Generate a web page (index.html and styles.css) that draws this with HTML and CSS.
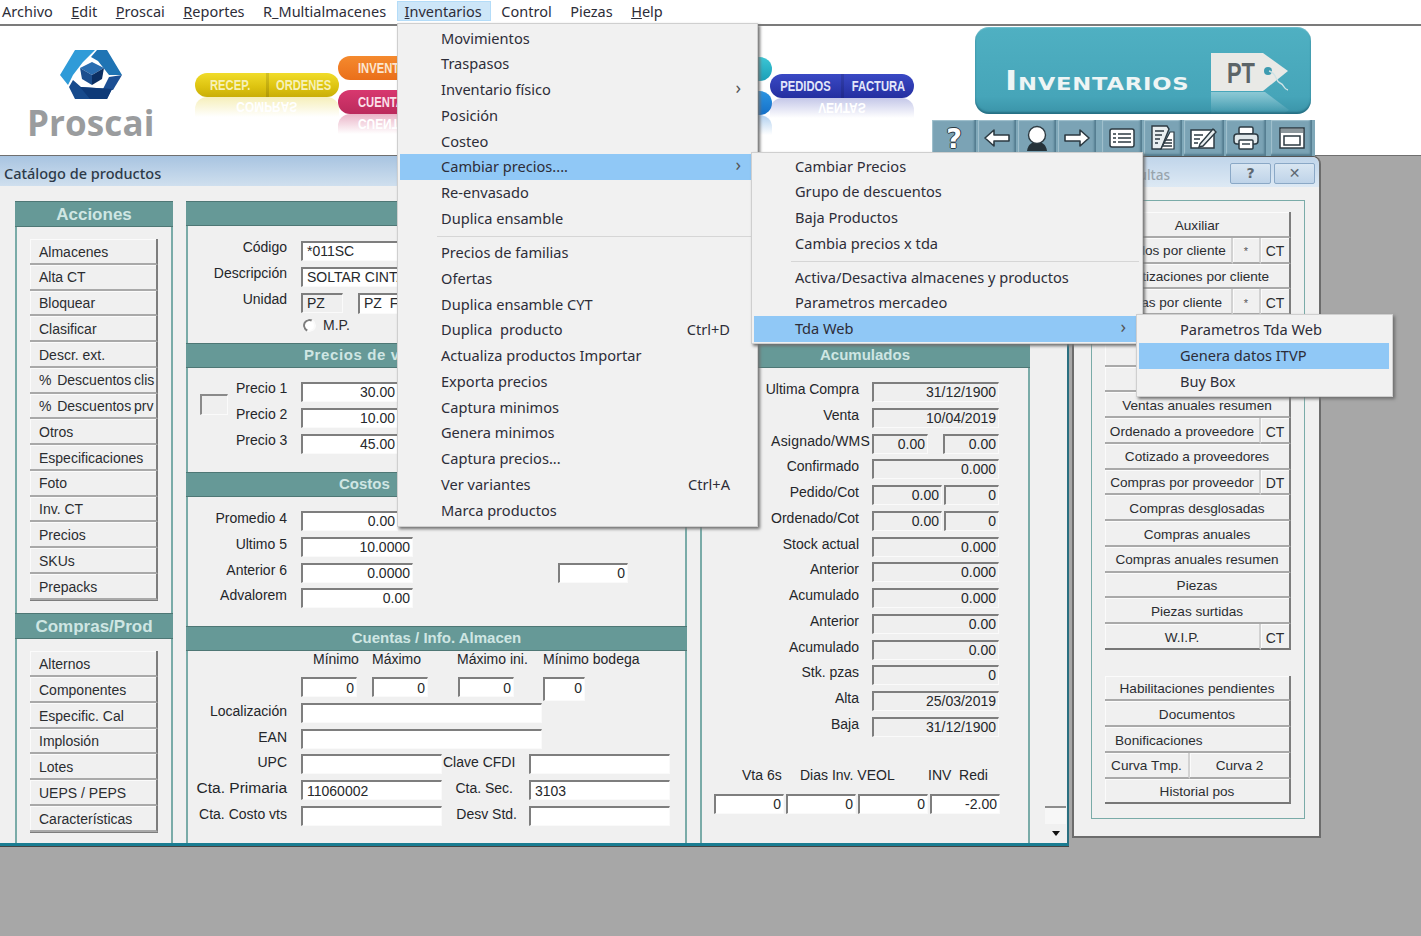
FILE: index.html
```html
<!DOCTYPE html>
<html lang="es">
<head>
<meta charset="utf-8">
<title>Catálogo de productos</title>
<link rel="stylesheet" href="styles.css">
</head>
<body>
<nav class="menubar">
  <span class="mb">Archivo</span>
  <span class="mb"><u>E</u>dit</span>
  <span class="mb"><u>P</u>roscai</span>
  <span class="mb"><u>R</u>eportes</span>
  <span class="mb">R_Multialmacenes</span>
  <span class="mb mb-open"><u>I</u>nventarios</span>
  <span class="mb">Control</span>
  <span class="mb">Piezas</span>
  <span class="mb"><u>H</u>elp</span>
</nav>

<header class="appbar">
  <div class="brand">
    <svg class="logo" viewBox="0 0 62 51" width="62" height="51" aria-hidden="true">
      <polygon fill="#2f9bd8" points="15,1 35,1 23,13 13,26 8,36 0,26"/>
      <polygon fill="#1f74b4" points="37,1 47,1 62,26 49,26 38,12 31,8"/>
      <polygon fill="#1c4f94" points="62,26 53,41 43,40 49,28"/>
      <polygon fill="#174a8c" points="13,31 21,38 52,40 47,50 15,50 9,38"/>
      <polygon fill="#0e3a78" points="20,38 52,40 47,50 30,50"/>
      <polygon fill="#2a6db0" points="20,19 32,13 44,19 32,26"/>
      <polygon fill="#1c4f8f" points="20,19 32,26 32,36 22,30"/>
      <polygon fill="#0b2f63" points="44,19 32,26 32,36 42,30"/>
    </svg>
    <div class="brand-name">Proscai</div>
  </div>

  <div class="pill-wrap pill-yellow">
    <div class="pill"><span class="pill-seg"><b>RECEP.</b></span><span class="pill-seg"><b>ORDENES</b></span></div>
    <div class="reflect"><span>COMPRAS</span></div>
  </div>

  <div class="pill-stack pill-stack-a">
    <div class="pill-wrap pill-orange"><div class="pill pill-short"><span class="pill-seg"><b>INVENTARIOS</b></span></div></div>
    <div class="pill-wrap pill-pink"><div class="pill pill-short"><span class="pill-seg"><b>CUENTAS</b></span></div><div class="reflect reflect-short"><span>CUENTAS</span></div></div>
  </div>

  <div class="pill-stack pill-stack-b">
    <div class="pill-wrap pill-cyan"><div class="pill pill-short"></div></div>
    <div class="pill-wrap pill-azure"><div class="pill pill-short"></div><div class="reflect reflect-short"></div></div>
  </div>

  <div class="pill-wrap pill-blue">
    <div class="pill"><span class="pill-seg"><b>PEDIDOS</b></span><span class="pill-seg"><b>FACTURA</b></span></div>
    <div class="reflect"><span>VENTAS</span></div>
  </div>

  <div class="right-tools">
    <div class="banner">
      <div class="banner-title">Inventarios</div>
      <svg class="tag" viewBox="0 0 80 62" width="80" height="62">
        <defs><linearGradient id="tagfade" x1="0" y1="0" x2="0" y2="1"><stop offset="0" stop-color="#ffffff" stop-opacity=".38"/><stop offset="1" stop-color="#ffffff" stop-opacity="0"/></linearGradient></defs>
        <polygon fill="url(#tagfade)" points="0,40 54,40 78,58 72,62 0,62"/>
        <polygon fill="#e9e9e6" points="0,1 52,1 77,19 52,39 0,39"/>
        <circle cx="57" cy="19" r="4" fill="#3d9bb0"/>
        <path d="M58 19c8 2 6 10 11 12s3 6 8 7" fill="none" stroke="#cfe3e6" stroke-width="1.4"/>
        <text x="16" y="31" class="tag-text" textLength="28" lengthAdjust="spacingAndGlyphs">PT</text>
      </svg>
    </div>
    <div class="iconbar">
      <div class="tb tb-a"><span class="q">?</span></div>
      <div class="tb tb-b"><svg viewBox="0 0 28 20" width="28" height="20"><path d="M2 10 11 2v5h15v6H11v5z" fill="#fff" stroke="#2c3a42" stroke-width="1.6" stroke-linejoin="round"/></svg></div>
      <div class="tb tb-b"><svg viewBox="0 0 26 26" width="26" height="26"><path d="M3 26c1-7 5-9 10-9s9 2 10 9z" fill="#26333a"/><circle cx="13" cy="10" r="8.5" fill="#fff" stroke="#2c3a42" stroke-width="1.4"/></svg></div>
      <div class="tb tb-b"><svg viewBox="0 0 28 20" width="28" height="20"><path d="M26 10 17 2v5H2v6h15v5z" fill="#fff" stroke="#2c3a42" stroke-width="1.6" stroke-linejoin="round"/></svg></div>
      <div class="tb tb-c tb-gap"><svg viewBox="0 0 26 20" width="26" height="20"><rect x="1" y="1" width="24" height="18" rx="2" fill="#fff" stroke="#2c3a42" stroke-width="1.5"/><path d="M4 6h3m2 0h13M4 10h3m2 0h13M4 14h3m2 0h13" stroke="#2c3a42" stroke-width="1.6"/></svg></div>
      <div class="tb tb-b"><svg viewBox="0 0 26 26" width="26" height="26"><path d="M2 1h15l2 3-8 20H2z" fill="#e8eef0" stroke="#2c3a42" stroke-width="1.4"/><path d="M5 6h9M5 10h7M5 14h5M5 18h3" stroke="#2c3a42" stroke-width="1.6"/><path d="M20 7h4v17H11z" fill="#fff" stroke="#2c3a42" stroke-width="1.2"/><path d="M16 15h6M14 18h8M13 21h9" stroke="#2c3a42" stroke-width="1.3"/></svg></div>
      <div class="tb tb-c"><svg viewBox="0 0 28 24" width="28" height="24"><rect x="1" y="4" width="23" height="18" fill="#fff" stroke="#2c3a42" stroke-width="1.5"/><path d="M4 9h9M4 13h6M4 17h4" stroke="#2c3a42" stroke-width="1.5"/><path d="M10 18 23 3l3 3-13 14-4 1z" fill="#e8eef0" stroke="#2c3a42" stroke-width="1.4"/></svg></div>
      <div class="tb tb-c"><svg viewBox="0 0 26 24" width="26" height="24"><rect x="6" y="1" width="14" height="7" rx="1.5" fill="#fff" stroke="#2c3a42" stroke-width="1.5"/><rect x="1" y="8" width="24" height="10" rx="3" fill="#dfe7ea" stroke="#2c3a42" stroke-width="1.5"/><rect x="6" y="14" width="14" height="9" rx="1" fill="#fff" stroke="#2c3a42" stroke-width="1.5"/><path d="M9 18h8" stroke="#2c3a42" stroke-width="1.4"/></svg></div>
      <div class="tb tb-d"><svg viewBox="0 0 26 22" width="26" height="22"><rect x="1" y="1" width="24" height="20" fill="#fff" stroke="#2c3a42" stroke-width="1.5"/><rect x="2" y="2" width="22" height="4" fill="#8c979c"/><rect x="5" y="9" width="16" height="9" fill="#fff" stroke="#2c3a42" stroke-width="1.5"/></svg></div>
    </div>
  </div>
</header>

<main class="desktop">
  <section class="window win-main">
    <div class="titlebar">Catálogo de productos</div>
    <div class="win-body">

      <div class="col-left">
        <div class="panel panel-acc">
          <h2 class="hdr hdr-big">Acciones</h2>
          <div class="btn-list">
            <div class="btn">Almacenes</div>
            <div class="btn">Alta CT</div>
            <div class="btn">Bloquear</div>
            <div class="btn">Clasificar</div>
            <div class="btn">Descr. ext.</div>
            <div class="btn btn-pct">%&nbsp; Descuentos clis</div>
            <div class="btn btn-pct">%&nbsp; Descuentos prv</div>
            <div class="btn">Otros</div>
            <div class="btn">Especificaciones</div>
            <div class="btn">Foto</div>
            <div class="btn">Inv. CT</div>
            <div class="btn">Precios</div>
            <div class="btn">SKUs</div>
            <div class="btn">Prepacks</div>
          </div>
        </div>
        <div class="panel panel-comp">
          <h2 class="hdr hdr-big">Compras/Prod</h2>
          <div class="btn-list">
            <div class="btn">Alternos</div>
            <div class="btn">Componentes</div>
            <div class="btn">Especific. Cal</div>
            <div class="btn">Implosión</div>
            <div class="btn">Lotes</div>
            <div class="btn">UEPS / PEPS</div>
            <div class="btn">Características</div>
          </div>
        </div>
      </div>

      <div class="panel col-mid">
        <h2 class="hdr"></h2>
        <div class="sec sec-gen">
          <div class="row"><span class="lbl">Código</span><div class="in w-wide">*011SC</div></div>
          <div class="row"><span class="lbl">Descripción</span><div class="in w-wide">SOLTAR CINTA</div></div>
          <div class="row"><span class="lbl">Unidad</span><div class="in g w-42">PZ</div><div class="in w-wide2 tall">PZ  F</div></div>
          <div class="row radio-row"><i class="radio"></i><span class="radio-lbl">M.P.</span></div>
        </div>

        <h2 class="hdr hdr-left hdr-precios">Precios de venta</h2>
        <div class="sec sec-pre">
          <div class="checkbox-box"></div>
          <div class="pre-rows">
            <div class="row"><span class="lbl lbl-pre">Precio 1</span><div class="in r w-97">30.00</div></div>
            <div class="row"><span class="lbl lbl-pre">Precio 2</span><div class="in r w-97">10.00</div></div>
            <div class="row"><span class="lbl lbl-pre">Precio 3</span><div class="in r w-97">45.00</div></div>
          </div>
        </div>

        <h2 class="hdr hdr-left hdr-costos">Costos</h2>
        <div class="sec sec-cos">
          <div class="row"><span class="lbl">Promedio 4</span><div class="in r w-97">0.00</div></div>
          <div class="row"><span class="lbl">Ultimo 5</span><div class="in r w-112">10.0000</div></div>
          <div class="row"><span class="lbl">Anterior 6</span><div class="in r w-112">0.0000</div><div class="in r w-70 ml-145">0</div></div>
          <div class="row"><span class="lbl">Advalorem</span><div class="in r w-112">0.00</div></div>
        </div>

        <h2 class="hdr">Cuentas / Info. Almacen</h2>
        <div class="sec sec-cue">
          <div class="colhead">
            <span class="ch ch-a">Mínimo</span><span class="ch ch-b">Máximo</span><span class="ch ch-c">Máximo ini.</span><span class="ch">Mínimo bodega</span>
          </div>
          <div class="row row-mins">
            <div class="in r w-56">0</div><div class="in r w-56 ml-15">0</div><div class="in r w-56 ml-30">0</div><div class="in r w-42 ml-29 taller">0</div>
          </div>
          <div class="row"><span class="lbl">Localización</span><div class="in w-241"></div></div>
          <div class="row"><span class="lbl">EAN</span><div class="in w-241"></div></div>
          <div class="row"><span class="lbl">UPC</span><div class="in w-141"></div><span class="lbl2">Clave CFDI</span><div class="in w-141"></div></div>
          <div class="row"><span class="lbl lbl-big">Cta. Primaria</span><div class="in w-141">11060002</div><span class="lbl2">Cta. Sec.</span><div class="in w-141">3103</div></div>
          <div class="row"><span class="lbl">Cta. Costo vts</span><div class="in w-141"></div><span class="lbl2 lbl2-wide">Desv Std.</span><div class="in w-141"></div></div>
        </div>
      </div>

      <div class="panel col-right">
        <h2 class="hdr"></h2>
        <div class="sec sec-top"></div>
        <h2 class="hdr">Acumulados</h2>
        <div class="sec sec-acu">
          <div class="row"><span class="lbl lbl-acu lbl-ult">Ultima&nbsp; Compra</span><div class="in g r w-127">31/12/1900</div></div>
          <div class="row"><span class="lbl lbl-acu">Venta</span><div class="in g r w-127">10/04/2019</div></div>
          <div class="row"><span class="lbl lbl-acu lbl-over">Asignado/WMS</span><div class="in g r w-56">0.00</div><div class="in g r w-56 ml-15">0.00</div></div>
          <div class="row"><span class="lbl lbl-acu">Confirmado</span><div class="in g r w-127">0.000</div></div>
          <div class="row"><span class="lbl lbl-acu">Pedido/Cot</span><div class="in g r w-70">0.00</div><div class="in g r w-55 ml-2">0</div></div>
          <div class="row"><span class="lbl lbl-acu">Ordenado/Cot</span><div class="in g r w-70">0.00</div><div class="in g r w-55 ml-2">0</div></div>
          <div class="row"><span class="lbl lbl-acu">Stock actual</span><div class="in g r w-127">0.000</div></div>
          <div class="row"><span class="lbl lbl-acu">Anterior</span><div class="in g r w-127">0.000</div></div>
          <div class="row"><span class="lbl lbl-acu">Acumulado</span><div class="in g r w-127">0.000</div></div>
          <div class="row"><span class="lbl lbl-acu">Anterior</span><div class="in g r w-127">0.00</div></div>
          <div class="row"><span class="lbl lbl-acu">Acumulado</span><div class="in g r w-127">0.00</div></div>
          <div class="row"><span class="lbl lbl-acu">Stk. pzas</span><div class="in g r w-127">0</div></div>
          <div class="row"><span class="lbl lbl-acu">Alta</span><div class="in g r w-127">25/03/2019</div></div>
          <div class="row"><span class="lbl lbl-acu">Baja</span><div class="in g r w-127">31/12/1900</div></div>
          <div class="foot-head"><span class="fh fh-a">Vta 6s</span><span class="fh fh-b">Dias Inv. VEOL</span><span class="fh">INV&nbsp; Redi</span></div>
          <div class="foot-row"><div class="in r w-70">0</div><div class="in r w-70 ml-2">0</div><div class="in r w-70 ml-2">0</div><div class="in r w-70 ml-2">-2.00</div></div>
        </div>
      </div>

      <div class="scroll">
        <div class="scroll-track"></div>
        <div class="scroll-gap"></div>
        <div class="scroll-down"><i class="tri"></i></div>
      </div>
    </div>
  </section>

  <section class="window win-side">
    <div class="titlebar titlebar-side">
      <span class="side-title">Consultas</span>
      <span class="cap-btn">?</span>
      <span class="cap-btn cap-x">✕</span>
    </div>
    <div class="side-frame">
      <div class="side-list">
        <div class="sbtn">Auxiliar</div>
        <div class="srow"><div class="sbtn s-flex">Pedidos por cliente</div><div class="sbtn s-star">*</div><div class="sbtn s-ct">CT</div></div>
        <div class="sbtn">Cotizaciones por cliente</div>
        <div class="srow"><div class="sbtn s-flex">Ventas por cliente</div><div class="sbtn s-star">*</div><div class="sbtn s-ct">CT</div></div>
        <div class="sbtn"></div>
        <div class="sbtn"></div>
        <div class="sbtn"></div>
        <div class="sbtn">Ventas anuales resumen</div>
        <div class="srow"><div class="sbtn s-flex">Ordenado a proveedore</div><div class="sbtn s-ct">CT</div></div>
        <div class="sbtn">Cotizado a proveedores</div>
        <div class="srow"><div class="sbtn s-flex">Compras por proveedor</div><div class="sbtn s-ct">DT</div></div>
        <div class="sbtn">Compras desglosadas</div>
        <div class="sbtn">Compras anuales</div>
        <div class="sbtn">Compras anuales resumen</div>
        <div class="sbtn">Piezas</div>
        <div class="sbtn">Piezas surtidas</div>
        <div class="srow srow-last"><div class="sbtn s-flex">W.I.P.</div><div class="sbtn s-ct">CT</div></div>
      </div>
      <div class="side-list side-list-2">
        <div class="sbtn">Habilitaciones pendientes</div>
        <div class="sbtn">Documentos</div>
        <div class="sbtn s-left">Bonificaciones</div>
        <div class="srow"><div class="sbtn s-curva">Curva Tmp.</div><div class="sbtn s-flex">Curva 2</div></div>
        <div class="sbtn srow-last">Historial pos</div>
      </div>
    </div>
  </section>
</main>

<div class="menu menu-1">
  <div class="mi">Movimientos</div>
  <div class="mi">Traspasos</div>
  <div class="mi">Inventario físico<span class="arrow">›</span></div>
  <div class="mi">Posición</div>
  <div class="mi">Costeo</div>
  <div class="mi on">Cambiar precios....<span class="arrow">›</span></div>
  <div class="mi">Re-envasado</div>
  <div class="mi">Duplica ensamble</div>
  <div class="sep"></div>
  <div class="mi">Precios de familias</div>
  <div class="mi">Ofertas</div>
  <div class="mi">Duplica ensamble CYT</div>
  <div class="mi">Duplica&nbsp; producto<span class="key">Ctrl+D</span></div>
  <div class="mi">Actualiza productos Importar</div>
  <div class="mi">Exporta precios</div>
  <div class="mi">Captura minimos</div>
  <div class="mi">Genera minimos</div>
  <div class="mi">Captura precios...</div>
  <div class="mi">Ver variantes<span class="key">Ctrl+A</span></div>
  <div class="mi">Marca productos</div>
</div>

<div class="menu menu-2">
  <div class="mi">Cambiar Precios</div>
  <div class="mi">Grupo de descuentos</div>
  <div class="mi">Baja Productos</div>
  <div class="mi">Cambia precios x tda</div>
  <div class="sep"></div>
  <div class="mi">Activa/Desactiva almacenes y productos</div>
  <div class="mi">Parametros mercadeo</div>
  <div class="mi on">Tda Web<span class="arrow">›</span></div>
</div>

<div class="menu menu-3">
  <div class="mi">Parametros Tda Web</div>
  <div class="mi on">Genera datos ITVP</div>
  <div class="mi">Buy Box</div>
</div>
</body>
</html>
```

FILE: styles.css
```css
* { box-sizing: border-box; }
html, body { margin: 0; height: 936px; overflow: hidden; }
body {
  position: relative;
  display: flex;
  flex-direction: column;
  background: #a7a7a7;
  font: 14px/14px "Liberation Sans", Arial, sans-serif;
  color: #24262a;
}

/* menu bar */
.menubar {
  height: 26px;
  flex: none;
  display: flex;
  align-items: center;
  padding: 0 0 2px 2px;
  gap: 18.5px;
  background: #fff;
  border-bottom: 2px solid #7b7b7b;
  font: 14.5px/18px "Noto Sans", sans-serif;
  color: #2d2d38;
  white-space: nowrap;
}
.mb-open {
  margin: 0 -8px;
  padding: 1px 9px 0 8px;
  height: 20px;
  background: #cde6f8;
  box-shadow: inset 0 0 0 1px #b4dcf8;
}

/* header with logo and shortcuts */
.appbar {
  height: 130px;
  flex: none;
  display: flex;
  align-items: flex-start;
  background: #fff;
  border-bottom: 1px solid #6f6f6f;
}
.brand { width: 195px; flex: none; padding: 23px 0 0 28px; }
.logo { display: block; margin-left: 32px; }
.brand-name {
  margin-top: 4px;
  margin-left: -1px;
  font: 700 35px/37px "Open Sans", sans-serif;
  letter-spacing: .1px;
  color: #9a9c9e;
}

.pill-wrap { flex: none; }
.pill {
  width: 144px;
  height: 24px;
  display: flex;
  border-radius: 12px;
  font: 700 14px/24px "Liberation Sans", sans-serif;
  color: #f4f3e2;
  overflow: hidden;
  white-space: nowrap;
}
.pill-seg { flex: 1; text-align: center; }
.pill-seg b { display: inline-block; font-weight: 700; transform: scaleX(.8); }
.pill-seg + .pill-seg { border-left: 3px solid rgba(0,0,0,.12); }
.pill-short { width: 212px; }
.pill-short .pill-seg { text-align: left; padding-left: 20px; }
.pill-short .pill-seg b { transform-origin: left center; }
.reflect {
  width: 144px;
  height: 20px;
  display: flex;
  justify-content: center;
  align-items: center;
  border-radius: 12px 12px 0 0;
  font: 700 14px/14px "Liberation Sans", sans-serif;
  color: #fff;
}
.reflect span { display: block; transform: scale(.85, -1); }
.reflect-short { width: 212px; justify-content: flex-start; padding-left: 20px; }
.reflect-short span { transform-origin: left center; }

.pill-yellow { margin-top: 47px; }
.pill-yellow .pill { background: linear-gradient(#f1dc2a, #dcc20f 60%, #c9ae08); color: #f6f1b8; }
.pill-yellow .reflect { background: linear-gradient(rgba(226,205,40,.32), rgba(240,230,120,0)); }

.pill-stack { width: 212px; flex: none; display: flex; flex-direction: column; }
.pill-stack-a { margin: 30px 0 0 -1px; }
.pill-stack-b { margin: 31px 0 0 10px; }
.pill-stack .pill-wrap + .pill-wrap { margin-top: 10px; }
.pill-orange .pill { background: linear-gradient(#f58a2e, #ea6f1a); color: #fbe6d0; }
.pill-pink .pill { background: linear-gradient(#d8386f, #bb2a5c); color: #fbe0ea; }
.pill-pink .reflect { background: linear-gradient(rgba(200,60,110,.38), rgba(200,60,110,0)); }
.pill-cyan .pill { background: linear-gradient(#3cc6d4, #1a9fb8); }
.pill-azure .pill { background: linear-gradient(#2c95e2, #1570c8); }
.pill-azure .reflect { background: linear-gradient(rgba(30,120,210,.35), rgba(30,120,210,0)); }

.pill-blue { margin: 48px 0 0 -2px; }
.pill-blue .pill { background: linear-gradient(#3a49c4, #242fa0); color: #e3e7fa; }
.pill-blue .reflect { background: linear-gradient(rgba(60,70,180,.3), rgba(60,70,180,0)); }

.right-tools { flex: none; margin: 1px 0 0 18px; display: flex; flex-direction: column; width: 383px; }
.banner {
  margin-left: 43px;
  width: 336px;
  height: 87px;
  display: flex;
  border-radius: 14px;
  background: linear-gradient(#4fb0c2, #46a5b9 80%, #3a93a8);
  box-shadow: inset 0 -2px 2px rgba(20,80,100,.55), inset 0 1px 1px rgba(255,255,255,.2);
}
.banner-title {
  margin: 41px 0 0 30px;
  width: 206px;
  font: 700 26px/26px "DejaVu Sans", sans-serif;
  font-variant: small-caps;
  letter-spacing: .6px;
  color: #eef5f5;
  white-space: nowrap;
  transform: scaleX(1.26);
  transform-origin: left center;
}
.tag { margin-top: 25px; flex: none; }
.tag-text { font: 700 30px "Liberation Sans", sans-serif; fill: #5c6467; }

.iconbar {
  margin-top: 6px;
  height: 36px;
  display: flex;
  align-items: stretch;
  background: #7fa8b9;
}
.tb {
  display: flex;
  justify-content: center;
  align-items: center;
  margin-right: 2px;
  background: #7ba3b5;
  box-shadow: inset -2px -2px 2px #557d90, inset 1px 1px 1px #a3c3cf;
  flex: none;
}
.tb-a { width: 44px; }
.tb-b { width: 38px; }
.tb-c { width: 40px; }
.tb-d { width: 41px; margin-left: 3px; margin-right: 0; }
.tb-gap { margin-left: 4px; }
.q { font: 700 27px/27px "DejaVu Sans", sans-serif; color: #fff; text-shadow: 1px 0 #2c3a42, -1px 0 #2c3a42, 0 1px #2c3a42, 0 -1px #2c3a42; }

/* desktop and windows */
.desktop { position: relative; flex: 1; }
.window { position: absolute; top: 0; background: #f0f0f0; display: flex; flex-direction: column; }
.win-main {
  left: 0;
  width: 1069px;
  height: 690px;
  border-right: 2px solid #2a6f80;
  border-bottom: 3px solid #1a7d92;
  box-shadow: 0 1px 0 #444;
}
.win-side {
  left: 1072px;
  width: 249px;
  height: 682px;
  border: 1px solid #6c6c6c;
  border-width: 1px 2px 2px 2px;
  border-radius: 6px 8px 0 0;
  border-top-color: #555;
}
.titlebar {
  height: 30px;
  flex: none;
  padding: 9px 0 0 4px;
  background: linear-gradient(#a8c4e1, #cfdfee);
  font: 500 14.5px/16px "Noto Sans", sans-serif;
  color: #2d3a48;
}
.titlebar-side {
  display: flex;
  height: 30px;
  padding: 6px 4px 0 0;
  background: linear-gradient(#c0d5ea, #dde9f4);
  border-radius: 5px 7px 0 0;
  justify-content: flex-end;
  align-items: flex-start;
}
.side-title { margin-right: 57px; padding-top: 4px; color: #98a4ac; font-size: 13.5px; }
.cap-btn {
  width: 41px;
  height: 21px;
  margin-left: 3px;
  border: 1px solid #8aa8c6;
  border-radius: 2px;
  background: linear-gradient(#d9e6f2, #bed3e8);
  text-align: center;
  font: 700 14px/19px "DejaVu Sans", sans-serif;
  color: #5d6872;
}
.win-body { flex: 1; display: flex; padding: 15px 0 0 15px; min-height: 0; }

.panel {
  display: flex;
  flex-direction: column;
  border: solid #7aaba8;
  border-width: 0 2px;
  background: #f0f0f0;
}
.col-left { width: 158px; flex: none; display: flex; flex-direction: column; }
.panel-acc { height: 412px; }
.panel-comp { flex: 1; }
.col-mid { width: 501px; flex: none; margin-left: 13px; }
.col-right { width: 330px; flex: none; margin-left: 13px; }

.hdr {
  height: 25px;
  flex: none;
  margin: 0 -2px;
  background: #669997;
  border-top: 1px solid #4e7775;
  border-bottom: 1px solid #4e7775;
  text-align: center;
  font: 700 15px/21px "Liberation Sans", sans-serif;
  color: #cfe6e3;
}
.hdr-big { height: 26px; font-size: 17px; line-height: 25px; }
.hdr-left { text-align: left; }
.hdr-precios { padding-left: 118px; letter-spacing: .6px; }
.hdr-costos { padding-left: 153px; }

/* command buttons */
.btn-list { margin: 12px 0 0 13px; width: 128px; border-bottom: 1px solid #7d7d7d; }
.panel-comp .btn-list { margin-top: 12.4px; }
.btn {
  height: 25.77px;
  padding: 5.6px 0 0 9px;
  overflow: hidden;
  white-space: nowrap;
  background: #f0f0f0;
  border-right: 2px solid #7d7d7d;
  border-bottom: 2px solid #a9a9a9;
  box-shadow: inset 1px 1px 0 #fbfbfb;
  color: #2b2d30;
}
.btn-pct { word-spacing: -1px; }

/* form sections */
.sec { flex: none; }
.sec-gen { height: 117px; padding-top: 15px; }
.sec-pre { height: 104px; padding: 14px 0 0 12px; display: flex; }
.sec-cos { height: 129px; padding-top: 14px; }
.sec-cue { flex: 1; }
.sec-top { height: 117px; }
.sec-acu { padding-top: 14px; flex: 1; }

.row { height: 25.77px; display: flex; align-items: flex-start; white-space: nowrap; }
.lbl { width: 100px; flex: none; margin-right: 13px; text-align: right; padding-right: 1px; }
.sec-gen .lbl, .sec-pre .lbl { position: relative; top: -1px; }
.sec-cue .lbl, .sec-cue .lbl2 { position: relative; top: 1px; }
.lbl-big { font-size: 15.5px; }
.lbl-pre { width: 52px; }
.lbl-acu { width: 157px; padding-right: 0; }
.lbl-ult { word-spacing: -2px; }
.lbl-over { margin-right: 2px; width: 168px; padding-right: 0; letter-spacing: .2px; margin-left: 0; }
.lbl-over + .in { margin-left: 0; }
.lbl2 { width: 70px; flex: none; margin: 0 16px 0 1px; text-align: right; }
.lbl2-wide { width: 74px; margin-right: 12px; }

.in {
  flex: none;
  height: 20px;
  padding: 0 2px 0 4px;
  background: #fff;
  border-style: solid;
  border-width: 2px 1px 1px 2px;
  border-color: #7e7e7e #fafafa #fafafa #7e7e7e;
  font: 14px/16px "Liberation Sans", sans-serif;
  color: #26282b;
  overflow: hidden;
  white-space: pre;
}
.sec-cue .in { line-height: 18px; }
.r { text-align: right; }
.g { background: #efefef; }
.tall { height: 21px; }
.taller { height: 24px; }
.w-42 { width: 42px; }
.w-55 { width: 55px; }
.w-56 { width: 56px; }
.w-70 { width: 70px; }
.w-97 { width: 97px; }
.w-112 { width: 112px; }
.w-127 { width: 127px; }
.w-141 { width: 141px; }
.w-241 { width: 241px; }
.w-wide { width: 380px; }
.w-wide2 { width: 320px; margin-left: 15px; }
.ml-2 { margin-left: 2px; }
.ml-15 { margin-left: 15px; }
.ml-29 { margin-left: 29px; }
.ml-30 { margin-left: 30px; }
.ml-145 { margin-left: 145px; }

.radio-row { padding: 0 0 0 115px; align-items: center; height: 14px; }
.radio {
  display: block;
  width: 13px;
  height: 13px;
  margin-right: 7px;
  border-radius: 50%;
  background: #fff;
  border: 2px solid;
  border-color: #7e7e7e #fafafa #fafafa #7e7e7e;
  transform: rotate(-20deg);
}
.radio-lbl { color: #2b2d30; }

.checkbox-box {
  width: 28px;
  height: 21px;
  margin: 12px 8px 0 0;
  flex: none;
  background: #efefef;
  border-style: solid;
  border-width: 2px 1px 1px 2px;
  border-color: #8a8a8a #fafafa #fafafa #8a8a8a;
}
.pre-rows { flex: 1; }

.colhead { height: 26px; padding: 1px 0 0 125px; display: flex; white-space: nowrap; }
.ch { flex: none; }
.ch-a { width: 59px; }
.ch-b { width: 85px; }
.ch-c { width: 86px; }
.row-mins { padding-left: 113px; }

.foot-head { margin-top: 24px; height: 27px; padding: 1px 0 0 40px; display: flex; white-space: nowrap; }
.fh { flex: none; }
.fh-a { width: 58px; }
.fh-b { width: 128px; }
.foot-row { display: flex; margin-left: 12px; }

/* scrollbar */
.scroll { width: 21px; flex: none; margin-left: 15px; display: flex; flex-direction: column; }
.scroll-track { flex: 1; background: #f0f0f0; border-bottom: 2px solid #8c8c8c; }
.scroll-gap { height: 16px; background: #f7f7f7; }
.scroll-down { height: 19px; display: flex; justify-content: center; align-items: center; background: #f0f0f0; }
.tri { width: 0; height: 0; border: solid transparent; border-width: 5px 4px 0; border-top-color: #111; }

/* side window */
.side-frame {
  margin: 13px 0 0 17px;
  width: 214px;
  height: 619px;
  border: 1px solid #7aaba8;
  padding: 11px 13px 0;
}
.side-list { width: 186px; }
.side-list-2 { margin-top: 25.5px; }
.sbtn {
  height: 25.77px;
  padding-top: 6.5px;
  text-align: center;
  white-space: nowrap;
  overflow: hidden;
  background: #f0f0f0;
  border-right: 2px solid #7d7d7d;
  border-bottom: 2px solid #a9a9a9;
  box-shadow: inset 1px 1px 0 #fbfbfb;
  font-size: 13.6px;
  color: #2b2d30;
}
.srow { display: flex; height: 25.77px; }
.srow .sbtn { border-right: 2px solid #d2d2d2; }
.srow .sbtn:last-child { border-right-color: #7d7d7d; }
.s-flex { flex: 1; min-width: 0; }
.s-star { width: 28px; flex: none; font-size: 11px; color: #555; }
.s-ct { width: 30px; flex: none; font-size: 14px; }
.s-curva { width: 85px; flex: none; }
.s-left { text-align: left; padding-left: 10px; }
.srow-last .sbtn, .sbtn.srow-last { border-bottom-color: #777; }

/* menus */
.menu {
  position: absolute;
  padding: 2px 3px 2px 2px;
  background: #f1f1f1;
  border: 1px solid #cfcfcf;
  box-shadow: 2px 2px 3px #6f6f6f;
  font: 14.6px/25.77px "Noto Sans", sans-serif;
  color: #2d2d38;
  white-space: nowrap;
}
.menu-1 { left: 397px; top: 23px; width: 361px; height: 504px; z-index: 5; padding-top: 1.5px; }
.menu-1 .sep { height: 8.5px; }
.menu-2 { left: 751px; top: 152px; width: 392px; height: 192px; z-index: 6; padding-top: .5px; }
.menu-2 .sep { height: 8px; }
.menu-3 { left: 1136px; top: 314px; width: 257px; height: 83px; z-index: 7; padding-top: 2px; }
.mi { height: 25.77px; padding-left: 41px; position: relative; }
.on { background: #90c8f6; }
.sep { margin-left: 37px; position: relative; }
.sep::after { content: ""; position: absolute; left: 0; right: 0; top: 4px; border-top: 1px solid #d6d6d6; }
.arrow { position: absolute; right: 13px; top: -2px; font-size: 18px; color: #555; }
.key { position: absolute; right: 24px; top: 0; }
```
